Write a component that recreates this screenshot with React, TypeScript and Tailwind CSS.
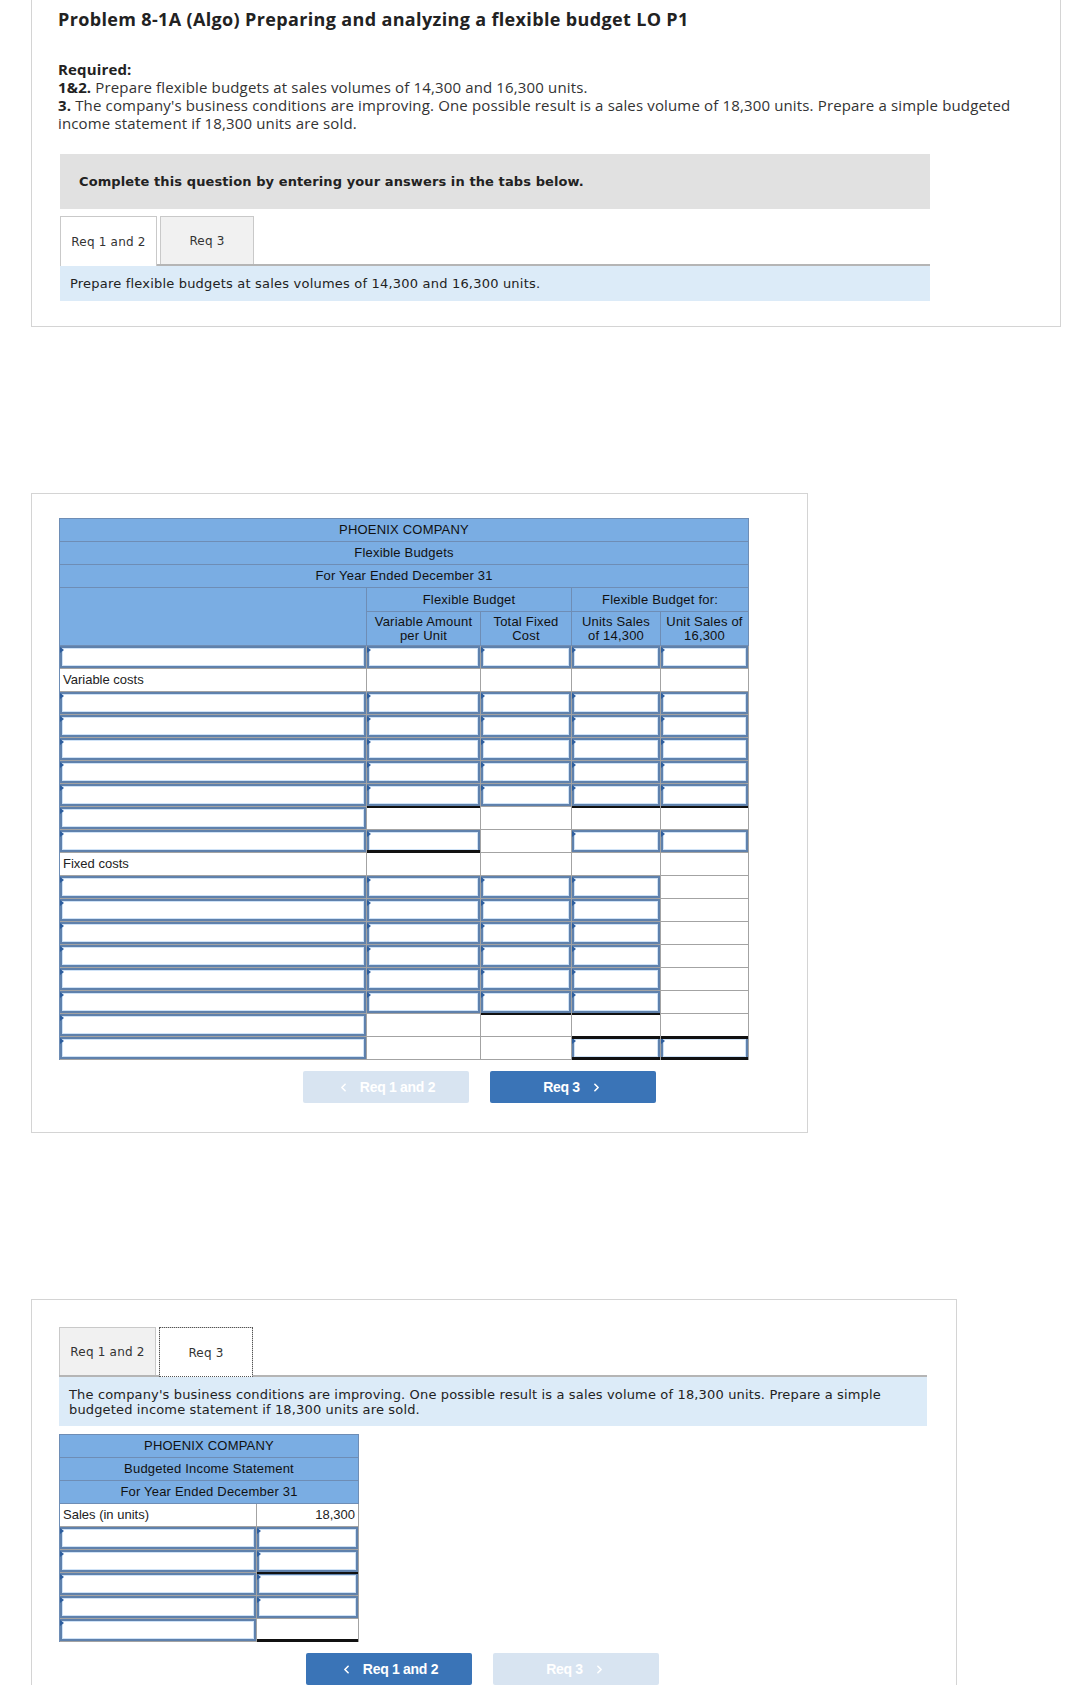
import React from 'react';
import { ChevronLeft, ChevronRight } from 'lucide-react';

type Cell = {
  kind: 'in' | 'plain' | 'text';
  text?: string;
  top?: 'thin' | 'thick';
  bottom?: 'thin' | 'thick';
  right?: boolean;
};

const IN: Cell = { kind: 'in' };
const PL: Cell = { kind: 'plain' };

const sans = "font-['Liberation_Sans',Arial,sans-serif]";
const verdana = "font-['DejaVu_Sans',Verdana,sans-serif]";

function InputBox() {
  return (
    <div className="absolute inset-0 border-2 border-[#5f81ac] bg-white shadow-[inset_0_0_0_1px_#cfe2f6]">
      <span className="absolute -left-[2px] -top-[1px] h-0 w-0 border-y-[3px] border-l-[4px] border-y-transparent border-l-[#2d5e9e]" />
    </div>
  );
}

function BodyCell({ cell }: { cell: Cell }) {
  return (
    <div className="relative border-r border-b border-[#a3a3a3] bg-white">
      {cell.kind === 'in' && <InputBox />}
      {cell.kind === 'text' && (
        <div className={`px-[3px] pt-[3px] text-[13px] leading-[15px] text-[#222] ${cell.right ? 'text-right' : ''}`}>
          {cell.text}
        </div>
      )}
      {cell.top && (
        <span className={`absolute left-0 right-0 -top-[1px] bg-[#111] ${cell.top === 'thick' ? 'h-[3px]' : 'h-[2px]'}`} />
      )}
      {cell.bottom && (
        <span className={`absolute left-0 right-0 -bottom-[1px] bg-[#111] ${cell.bottom === 'thick' ? 'h-[3px]' : 'h-[2px]'}`} />
      )}
    </div>
  );
}

const flexRows: Cell[][] = [
  [IN, IN, IN, IN, IN],
  [{ kind: 'text', text: 'Variable costs' }, PL, PL, PL, PL],
  [IN, IN, IN, IN, IN],
  [IN, IN, IN, IN, IN],
  [IN, IN, IN, IN, IN],
  [IN, IN, IN, IN, IN],
  [IN, IN, IN, IN, IN],
  [IN, { kind: 'plain', top: 'thin' }, PL, { kind: 'plain', top: 'thin' }, { kind: 'plain', top: 'thin' }],
  [IN, { kind: 'in', bottom: 'thick' }, PL, IN, IN],
  [{ kind: 'text', text: 'Fixed costs' }, PL, PL, PL, PL],
  [IN, IN, IN, IN, PL],
  [IN, IN, IN, IN, PL],
  [IN, IN, IN, IN, PL],
  [IN, IN, IN, IN, PL],
  [IN, IN, IN, IN, PL],
  [IN, IN, IN, IN, PL],
  [IN, PL, { kind: 'plain', top: 'thin' }, { kind: 'plain', top: 'thin' }, PL],
  [IN, PL, PL, { kind: 'in', top: 'thick', bottom: 'thick' }, { kind: 'in', top: 'thick', bottom: 'thick' }],
];

const incomeRows: Cell[][] = [
  [{ kind: 'text', text: 'Sales (in units)' }, { kind: 'text', text: '18,300', right: true }],
  [IN, IN],
  [IN, IN],
  [IN, { kind: 'in', top: 'thin' }],
  [IN, IN],
  [IN, { kind: 'plain', bottom: 'thick' }],
];

function Tabs({ active }: { active: 1 | 3 }) {
  const base = `flex h-[48px] items-center justify-center border border-b-0 border-[#c9c9c9] text-[12px] tracking-[0.2px] text-[#333] ${verdana}`;
  return (
    <div className="flex gap-[3px]">
      <div className={`${base} w-[97px] ${active === 1 ? 'relative z-10 -mb-[2px] h-[50px] bg-white' : 'bg-[#f1f1f1]'}`}>Req 1 and 2</div>
      <div
        className={`${base} w-[94px] ${
          active === 3 ? 'relative z-10 -mb-[2px] h-[50px] bg-white outline-1 outline-dotted outline-[#555] -outline-offset-1' : 'bg-[#f1f1f1]'
        }`}
      >
        Req 3
      </div>
    </div>
  );
}

function NavButtons({ active }: { active: 'prev' | 'next' }) {
  const base = `flex h-[32px] w-[166px] items-center justify-center gap-[10px] rounded-[2px] text-[14px] font-bold tracking-[-0.3px] text-white ${sans}`;
  return (
    <div className="flex gap-[21px]">
      <div className={`${base} ${active === 'prev' ? 'bg-[#3a74b7]' : 'bg-[#d8e4f1]'}`}>
        <ChevronLeft size={13} strokeWidth={3} />
        <span>Req 1 and 2</span>
      </div>
      <div className={`${base} ${active === 'next' ? 'bg-[#3a74b7]' : 'bg-[#d8e4f1]'}`}>
        <span>Req 3</span>
        <ChevronRight size={13} strokeWidth={3} />
      </div>
    </div>
  );
}

function TitleRow({ children }: { children: React.ReactNode }) {
  return (
    <div className="flex h-[23px] items-center justify-center border-r border-b border-[#6e8db5] bg-[#7aade3] text-[13px] tracking-[0.2px] text-[#111]">
      {children}
    </div>
  );
}

function FlexibleBudgetTable() {
  const head = 'flex items-center justify-center border-r border-b border-[#6e8db5] bg-[#7aade3] text-center text-[13px] leading-[14px] tracking-[0.2px] text-[#111]';
  return (
    <div className={`w-[690px] border-l border-t border-[#6e8db5] ${sans}`}>
      <TitleRow>PHOENIX COMPANY</TitleRow>
      <TitleRow>Flexible Budgets</TitleRow>
      <TitleRow>For Year Ended December 31</TitleRow>
      <div className="grid grid-cols-[307px_114px_91px_89px_88px] grid-rows-[24px_34px]">
        <div className={`${head} row-span-2`} />
        <div className={`${head} col-span-2`}>Flexible Budget</div>
        <div className={`${head} col-span-2`}>Flexible Budget for:</div>
        <div className={head}>Variable Amount<br />per Unit</div>
        <div className={head}>Total Fixed<br />Cost</div>
        <div className={head}>Units Sales<br />of 14,300</div>
        <div className={head}>Unit Sales of<br />16,300</div>
      </div>
      <div className="grid grid-cols-[307px_114px_91px_89px_88px] auto-rows-[23px]">
        {flexRows.map((row, i) => row.map((c, j) => <BodyCell key={`${i}-${j}`} cell={c} />))}
      </div>
    </div>
  );
}

function IncomeTable() {
  return (
    <div className={`w-[300px] border-l border-t border-[#6e8db5] ${sans}`}>
      <TitleRow>PHOENIX COMPANY</TitleRow>
      <TitleRow>Budgeted Income Statement</TitleRow>
      <TitleRow>For Year Ended December 31</TitleRow>
      <div className="grid grid-cols-[197px_102px] auto-rows-[23px]">
        {incomeRows.map((row, i) => row.map((c, j) => <BodyCell key={`${i}-${j}`} cell={c} />))}
      </div>
    </div>
  );
}

export default function App() {
  return (
    <div className="min-h-[1692px] bg-white pb-[10px]">
      {/* problem statement */}
      <div className="ml-[31px] w-[1030px] border-r border-b border-l border-[#d4d4d4] pb-[25px]">
        <div className="px-[26px] font-['Open_Sans',sans-serif] text-[#222]">
          <h1 className="pt-[7px] text-[18px] leading-[24px] font-bold tracking-[0.35px]">
            Problem 8-1A (Algo) Preparing and analyzing a flexible budget LO P1
          </h1>
          <div className="mt-[29px] w-[975px] text-[15px] leading-[18px] tracking-[0.15px] text-[#333]">
            <div className="font-bold text-[#222]">Required:</div>
            <div>
              <b className="text-[#222]">1&amp;2.</b> Prepare flexible budgets at sales volumes of 14,300 and 16,300 units.
            </div>
            <div>
              <b className="text-[#222]">3.</b> The company's business conditions are improving. One possible result is a sales volume of
              18,300 units. Prepare a simple budgeted income statement if 18,300 units are sold.
            </div>
          </div>
        </div>
        <div className="ml-[28px] mt-[22px] w-[870px]">
          <div className={`flex h-[55px] items-center bg-[#e1e1e1] pl-[19px] text-[13px] font-bold tracking-[0.1px] text-[#222] ${verdana}`}>
            Complete this question by entering your answers in the tabs below.
          </div>
          <div className="mt-[7px]">
            <Tabs active={1} />
          </div>
          <div className={`flex h-[37px] items-center border-t-2 border-[#b5b5b5] bg-[#dcebf8] pl-[10px] text-[13px] tracking-[0.2px] text-[#222] ${verdana}`}>
            Prepare flexible budgets at sales volumes of 14,300 and 16,300 units.
          </div>
        </div>
      </div>

      {/* Req 1 and 2 */}
      <div className="ml-[31px] mt-[166px] w-[777px] border border-[#d4d4d4] pt-[24px] pb-[29px] pl-[27px]">
        <FlexibleBudgetTable />
        <div className="mt-[11px] pl-[244px]">
          <NavButtons active="next" />
        </div>
      </div>

      {/* Req 3 */}
      <div className="ml-[31px] mt-[166px] w-[926px] border border-b-0 border-[#d4d4d4] pt-[27px] pl-[27px]">
        <Tabs active={3} />
        <div className={`w-[868px] border-t-2 border-[#b5b5b5] bg-[#dcebf8] px-[10px] pt-[10px] pb-[9px] text-[13px] leading-[15px] tracking-[0.15px] text-[#222] ${verdana}`}>
          The company's business conditions are improving. One possible result is a sales volume of 18,300 units. Prepare a simple
          <br />
          budgeted income statement if 18,300 units are sold.
        </div>
        <div className="mt-[8px]">
          <IncomeTable />
        </div>
        <div className="mt-[11px] pl-[247px]">
          <NavButtons active="prev" />
        </div>
      </div>
    </div>
  );
}
